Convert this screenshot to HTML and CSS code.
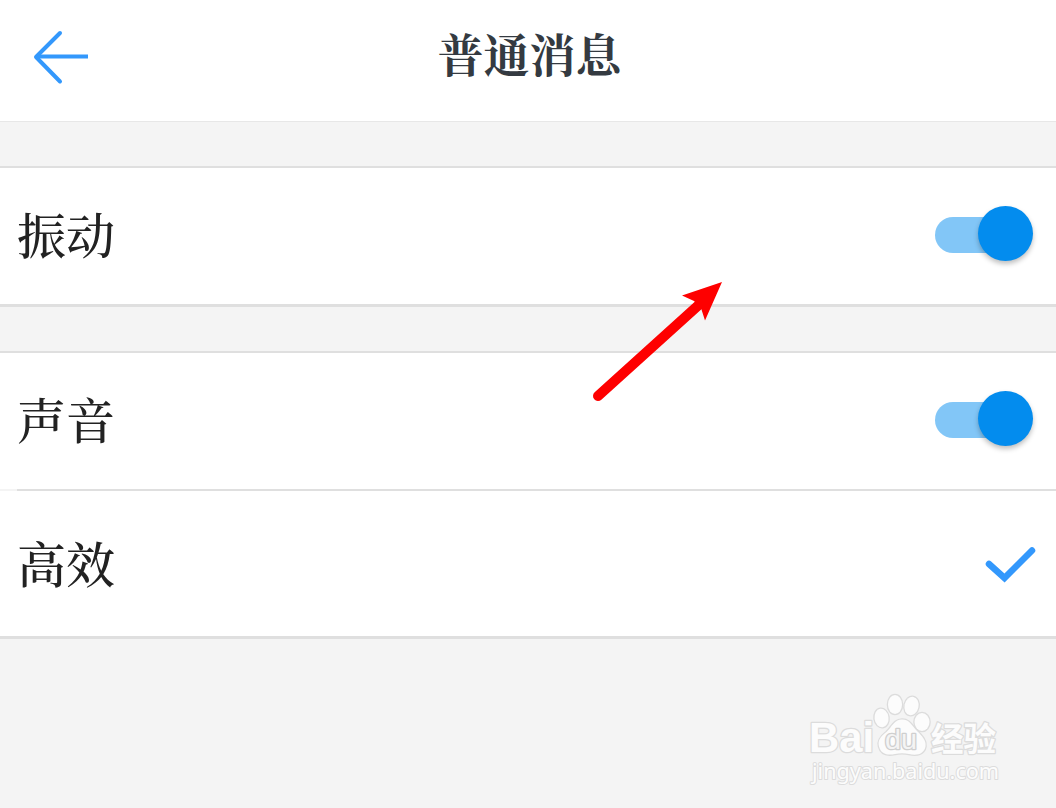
FILE: index.html
```
<!DOCTYPE html>
<html lang="zh-CN">
<head>
    <meta charset="UTF-8">
    <meta name="viewport" content="width=device-width, initial-scale=1.0">
    <title>普通消息</title>
    <link rel="stylesheet" href="styles.css">
</head>
<body>
    <div class="header">
        <a href="#" class="back">
            <svg width="60" height="60" viewBox="0 0 60 60">
                <path d="M30 5 L6 29 L30 53.500" />
                <path class="shaft" d="M6 28.500 H58" />
            </svg>
        </a>
        <h1>普通消息</h1>
    </div>

    <div class="group">
        <div class="row">
            <span class="label">振动</span>
            <span class="switch"><span class="thumb"></span></span>
        </div>
    </div>

    <div class="group">
        <div class="row">
            <span class="label">声音</span>
            <span class="switch"><span class="thumb"></span></span>
        </div>
        <div class="divider"></div>
        <div class="row row-mode">
            <span class="label">高效</span>
            <svg class="check" width="52" height="40" viewBox="0 0 52 40">
                <path d="M5 20 L20.500 34 L48 6.500" />
            </svg>
        </div>
    </div>

    <!-- 箭头标注 -->
    <svg class="pointer" width="140" height="130" viewBox="0 0 140 130">
        <path class="pointer-line" d="M18 116 L122 22" />
        <path class="pointer-head" d="M142 2 L102 15.500 L114 21 L121 28 L125 40.500 Z" />
    </svg>

    <!-- 水印 -->
    <div class="watermark">
        <svg width="210" height="100" viewBox="0 0 210 100">
            <g class="mark">
                <text class="mark-logo" x="9" y="61" textLength="65" lengthAdjust="spacingAndGlyphs">Bai</text>
                <ellipse cx="81.500" cy="27" rx="7" ry="9.300" transform="rotate(-8 81.500 27)" />
                <ellipse cx="95" cy="13.500" rx="7" ry="9.500" />
                <ellipse cx="111.500" cy="15" rx="7" ry="9.300" transform="rotate(12 111.500 15)" />
                <ellipse cx="122" cy="31" rx="7.500" ry="9" />
                <path d="M102 28.500 C94 28.500 92 36 86.500 41 C80 46 77.500 50 79 55.500 C81 63.500 88 64.500 95 63 C100 62 104 62 109 63 C117 65 124 63 125.500 55.500 C126.500 49.500 122 45 117 40 C112 35 110 28.500 102 28.500 Z" />
                <text class="mark-du" x="85" y="57.500" textLength="32" lengthAdjust="spacingAndGlyphs">du</text>
                <text class="mark-cn" x="131" y="60" textLength="65" lengthAdjust="spacingAndGlyphs">经验</text>
                <text class="mark-url" x="12" y="87.500" textLength="187" lengthAdjust="spacingAndGlyphs">jingyan.baidu.com</text>
            </g>
        </svg>
    </div>
</body>
</html>
```
FILE: styles.css
```
body {
    position: relative;
    height: 808px;
    margin: 0;
    overflow: hidden;
    background-color: #f4f4f4;
    font-family: "Noto Serif CJK SC", "Noto Serif SC", serif;
}

.header {
    display: grid;
    grid-template-columns: 120px 1fr 120px;
    align-items: center;
    height: 121px;
    border-bottom: 1px solid #e7e7e7;
    background-color: white;
}

.header h1 {
    margin: 0 0 17px 3px;
    color: #343a41;
    font-size: 46px;
    line-height: 60px;
    font-weight: bold;
    text-align: center;
}

.back {
    height: 60px;
    padding-left: 30px;
    margin-bottom: 5px;
}

.back svg {
    display: block;
}

.back path,
.check path {
    fill: none;
    stroke: #3398fc;
    stroke-width: 4;
    stroke-linecap: round;
    stroke-linejoin: round;
}

.back .shaft {
    stroke-linecap: butt;
}

.group {
    margin-top: 44px;
    border-top: 2px solid #dfdfdf;
    border-bottom: 3px solid #dfdfdf;
    background-color: white;
}

.row {
    display: flex;
    align-items: center;
    justify-content: space-between;
    height: 136px;
    padding: 0 20px 0 17px;
}

.row-mode {
    height: 145px;
}

.label {
    margin-bottom: 6px;
    color: #222;
    font-size: 49px;
    line-height: 70px;
    font-weight: 500;
}

.row-mode .label {
    margin-bottom: 4px;
}

.switch {
    width: 80px;
    height: 36px;
    margin: 0 21px 2px 0;
    border-radius: 18px;
    background-color: #82c6f7;
}

.thumb {
    display: block;
    width: 55px;
    height: 55px;
    margin: -11px 0 0 43px;
    border-radius: 50%;
    background-color: #038cee;
    box-shadow: 0 3px 5px rgba(0, 0, 0, 0.25);
}

.divider {
    height: 2px;
    border-left: 17px solid #f4f4f4;
    background-color: #dfdfdf;
}

.check path {
    stroke-width: 6.5;
    stroke-linejoin: miter;
}

.pointer {
    position: absolute;
    left: 580px;
    top: 280px;
    overflow: visible;
}

.pointer-line {
    stroke: #fe0000;
    stroke-width: 10;
    stroke-linecap: round;
}

.pointer-head {
    fill: #fe0000;
}

.watermark {
    position: absolute;
    left: 800px;
    top: 691px;
}

.mark {
    fill: #fcfcfc;
    stroke: #dcdcdc;
    stroke-width: 2.6;
    stroke-linejoin: round;
    paint-order: stroke;
}

.mark-logo,
.mark-du {
    font-family: "Liberation Sans", Arial, sans-serif;
    font-weight: bold;
}

.mark-logo {
    font-size: 42px;
}

.mark-du {
    fill: #f4f4f4;
    stroke: #cfcfcf;
    font-size: 27px;
    font-weight: normal;
}

.mark-cn {
    font-family: "Liberation Sans", "Noto Sans CJK SC", sans-serif;
    font-size: 33px;
    font-weight: bold;
}

.mark-url {
    font-family: "Noto Sans", sans-serif;
    font-size: 21px;
    stroke-width: 2;
}
```
